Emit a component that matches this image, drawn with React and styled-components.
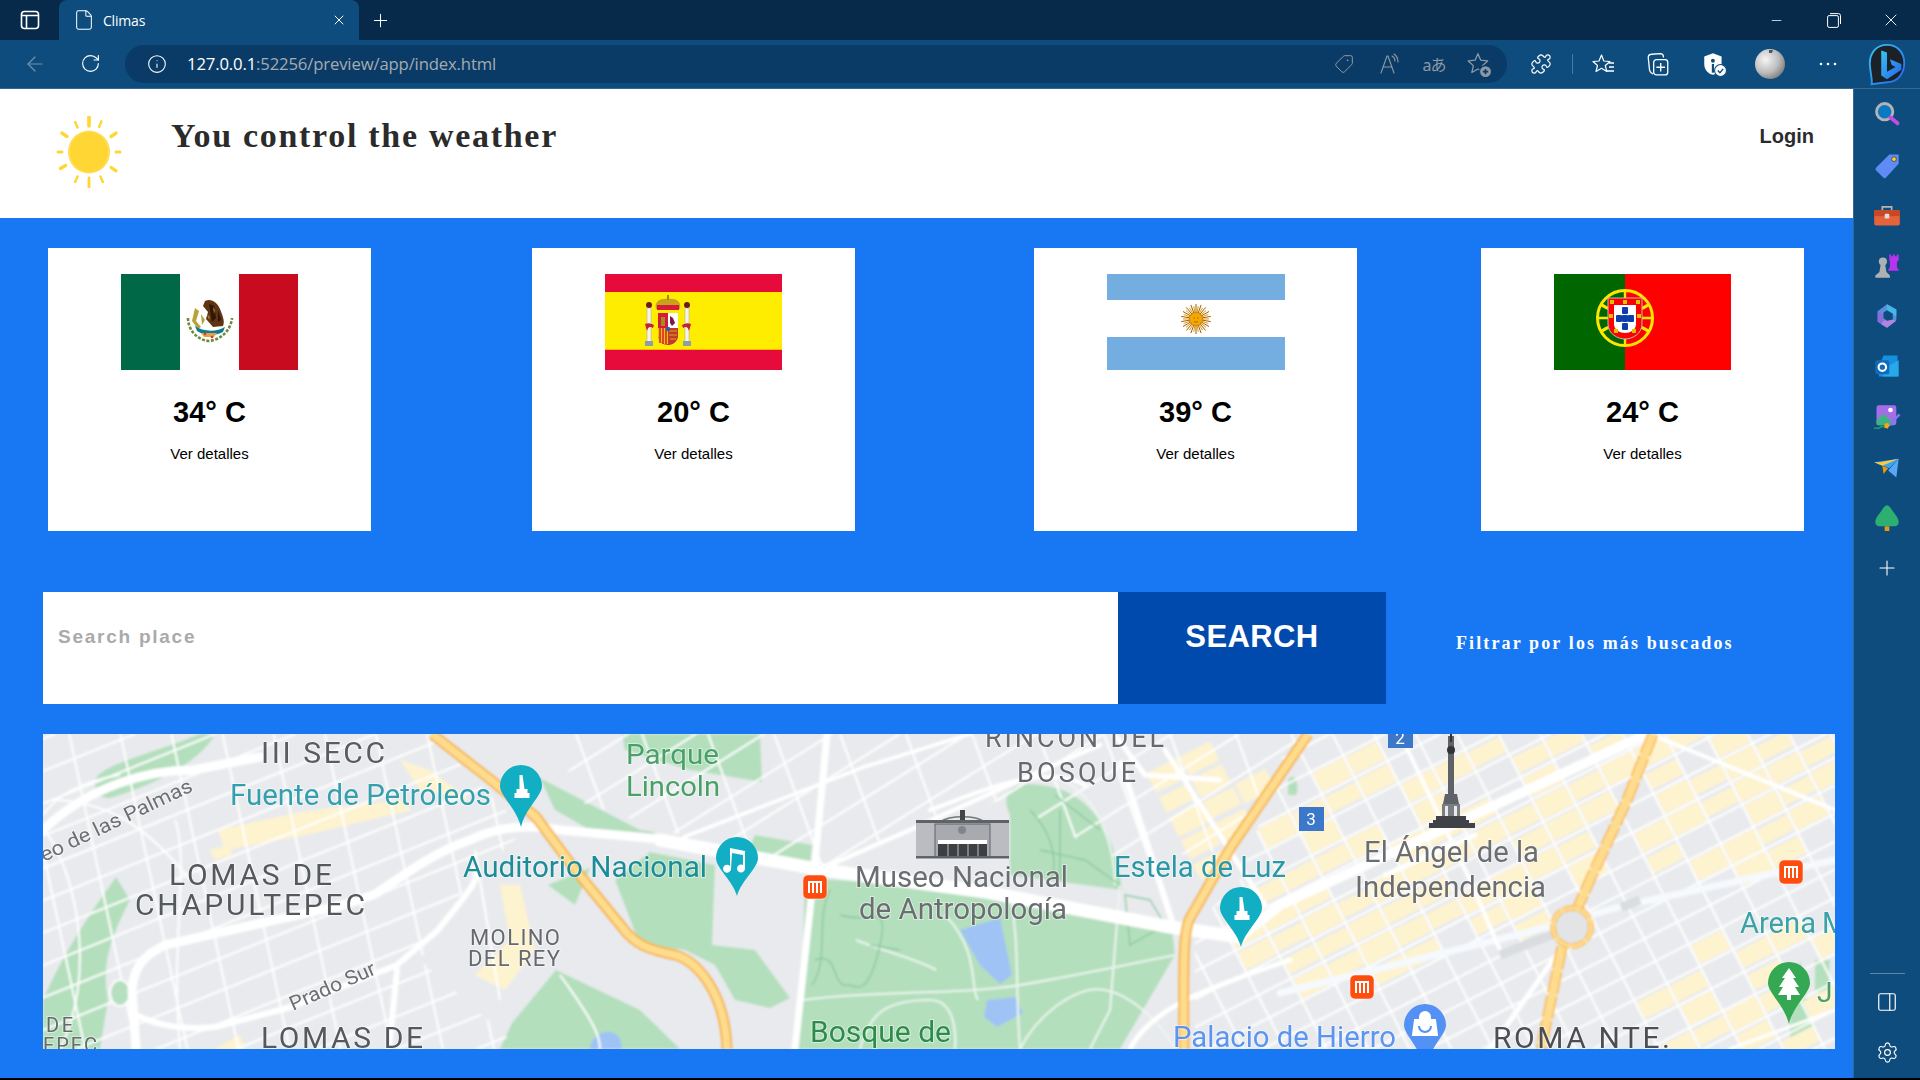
import React from "react";
import styled, { createGlobalStyle } from "styled-components";
import { ArrowLeft, RotateCw, Info, Tag, Puzzle, Plus, X, Minus, File as FileIcon, Settings, PanelRight } from "lucide-react";

const Global = createGlobalStyle`
  html, body { margin: 0; padding: 0; background: #000; overflow: hidden; }
  * { box-sizing: border-box; }
`;

const Shell = styled.div`
  width: 1920px; height: 1080px; background: #000; display: flex; flex-direction: column; overflow: hidden;
  font-family: "Liberation Sans", Arial, sans-serif;
`;
const TitleBar = styled.div`
  height: 40px; background: #072a4a; display: flex; align-items: flex-end; color: #fff; flex: none;
`;
const TabToggle = styled.div`
  width: 59px; height: 40px; display: flex; align-items: center; justify-content: center;
`;
const BrowserTab = styled.div`
  width: 300px; height: 40px; background: #0d4c7d; border-radius: 8px 8px 0 0; display: flex; align-items: center;
  padding: 0 12px 0 14px; font: 14px "Open Sans", "Noto Sans", sans-serif; color: #fff;
`;
const TabLabel = styled.span` margin-left: 8px; flex: 1; letter-spacing: -0.2px; `;
const NewTab = styled.div` width: 42px; height: 40px; display: flex; align-items: center; justify-content: center; `;
const WindowControls = styled.div` margin-left: auto; display: flex; height: 40px; align-items: center; padding-right: 1px; `;
const WinButton = styled.div` width: 57px; display: flex; justify-content: center; align-items: center; `;

const ToolBar = styled.div`
  height: 49px; background: #0d4c7d; display: flex; align-items: center; flex: none; border-bottom: 1px solid #34688f; padding-bottom: 1px;
`;
const NavSlot = styled.div`
  width: 32px; height: 32px; display: flex; align-items: center; justify-content: center; margin-left: ${p => p.$ml}px; flex: none; color: ${p => p.$dim ? "#6f94b3" : "#fff"};
`;
const AddressPill = styled.div`
  width: 1382px; height: 38px; margin-left: 19px; background: #0a3b66; border-radius: 19px; display: flex; align-items: center; padding: 0 12px 0 22px; flex: none;
`;
const Url = styled.span`
  font: 16.7px "Open Sans", "Noto Sans", sans-serif; color: #a5abb1; margin-left: 20px; letter-spacing: -0.15px; flex: 1;
  b { font-weight: 400; color: #fff; }
`;
const PillSlot = styled.div`
  width: 32px; height: 32px; margin-left: 13px; display: flex; align-items: center; justify-content: center; color: #8d99a5; flex: none;
  font: 16px "Noto Sans", "Noto Sans CJK JP", sans-serif; letter-spacing: -1px;
`;
const Divider = styled.div` width: 1px; height: 20px; background: #4d7a9c; margin-left: 15px; flex: none; `;

const Body = styled.div` flex: none; display: flex; height: 989px; `;
const Page = styled.main` width: 1853px; background: #1877f2; display: flex; flex-direction: column; flex: none; `;
const SideBar = styled.aside`
  width: 67px; background: #0d4c7d; border-left: 1px solid #34688f; display: flex; flex-direction: column; align-items: center; flex: none;
`;
const SideSlot = styled.div`
  height: 50.4px; width: 100%; display: flex; align-items: center; justify-content: center; flex: none; color: #fff;
`;
const SideRule = styled.div` width: 35px; height: 1px; background: #5b86a7; margin-top: auto; margin-bottom: 3px; flex: none; `;
const SideFoot = styled.div` height: 50px; width: 100%; display: flex; align-items: center; justify-content: center; color: #fff; flex: none; margin-bottom: ${p => p.$mb || 0}px; `;

const Header = styled.header` height: 129px; background: #fff; display: flex; align-items: flex-start; padding: 27px 39px 0 56px; flex: none; `;
const Title = styled.h1`
  margin: 2px 0 0 49px; font: bold 34px/36px "Liberation Serif", "Times New Roman", serif; letter-spacing: 1.7px; color: #2b2b2b;
`;
const Login = styled.a` margin: 2px 0 0 auto; font: bold 20px/36px "Liberation Sans", Arial, sans-serif; color: #2b2b2b; `;

const Cards = styled.section` display: flex; padding: 30px 0 0 48px; flex: none; `;
const Card = styled.article`
  width: 323px; height: 283px; background: #fff; margin-left: ${p => p.$ml}px; display: flex; flex-direction: column; align-items: center; padding-top: 26px; flex: none;
`;
const Temp = styled.div` margin-top: 25px; font: bold 29px/34px "Liberation Sans", Arial, sans-serif; color: #000; `;
const Details = styled.a` margin-top: 15px; font: 15px/20px "Liberation Sans", Arial, sans-serif; color: #000; `;

const SearchRow = styled.section` display: flex; align-items: flex-start; margin-top: 61px; padding-left: 43px; flex: none; `;
const SearchInput = styled.input`
  width: 1075px; height: 112px; border: 0; background: #fff; padding: 0 15px 22px; outline: none; flex: none;
  font: bold 19px "Liberation Sans", Arial, sans-serif; letter-spacing: 1.75px;
  &::placeholder { color: #aaa; opacity: 1; }
`;
const SearchButton = styled.button`
  width: 268px; height: 112px; background: #004aad; border: 0; color: #fff; padding: 0 0 22px; flex: none;
  font: bold 31px "Liberation Sans", Arial, sans-serif; letter-spacing: 0.4px;
`;
const FilterLink = styled.a`
  margin: 40px 0 0 70px; font: bold 18px/22px "Liberation Serif", "Times New Roman", serif; letter-spacing: 2.12px; color: #fff;
`;
const MapFrame = styled.section`
  margin: 30px 0 0 43px; width: 1792px; height: 315px; overflow: hidden; flex: none; background: #e8eaed; line-height: 0;
`;
const MapText = styled.text`
  font-family: Roboto, "Noto Sans", sans-serif; font-size: ${p => p.$size}px; fill: ${p => p.$fill};
  stroke: rgba(255,255,255,.45); stroke-width: 2px; paint-order: stroke;
`;
const Svg = styled.svg` display: block; flex: none; `;

const rnd = (i, j) => { const s = Math.sin(i * 12.9898 + j * 78.233) * 43758.5453; return s - Math.floor(s); };

const inPoly = (x, y, pts) => {
  let c = false;
  for (let i = 0, j = pts.length - 1; i < pts.length; j = i++) {
    const [xi, yi] = pts[i], [xj, yj] = pts[j];
    if ((yi > y) !== (yj > y) && x < ((xj - xi) * (y - yi)) / (yj - yi) + xi) c = !c;
  }
  return c;
};

const yellowZones = [
  { p: [[1300, 760], [1640, 734], [1590, 880], [1550, 925], [1290, 1000], [1240, 940]], t: 0.88 },
  { p: [[1650, 734], [1835, 734], [1835, 850], [1700, 905], [1640, 850]], t: 0.72 },
  { p: [[1660, 950], [1835, 920], [1835, 1049], [1640, 1049]], t: 0.55 },
  { p: [[1140, 770], [1215, 740], [1275, 790], [1225, 880], [1190, 870]], t: 1 },
];

const downtownBlocks = (() => {
  const out = [];
  const a = (-27 * Math.PI) / 180, du = 37, dv = 25;
  for (let i = -24; i < 24; i++) for (let j = -24; j < 24; j++) {
    const u = (i + 0.5) * du, v = (j + 0.5) * dv;
    const cx = 1500 + Math.cos(a) * u - Math.sin(a) * v;
    const cy = 900 + Math.sin(a) * u + Math.cos(a) * v;
    const zone = yellowZones.find(z => inPoly(cx, cy, z.p));
    if (zone && rnd(i, j) < zone.t) out.push([cx, cy, du - 3, dv - 3 - rnd(j, i) * 6]);
  }
  return out;
})();

const gridLines = (ox, oy, deg, step, n, len) => {
  const out = [];
  const a = (deg * Math.PI) / 180;
  for (let i = -n; i <= n; i++) {
    const mx = ox - Math.sin(a) * i * step, my = oy + Math.cos(a) * i * step;
    out.push(`M${mx - Math.cos(a) * len} ${my - Math.sin(a) * len}L${mx + Math.cos(a) * len} ${my + Math.sin(a) * len}`);
  }
  return out.join("");
};

const labels = [
  ["III SECC", 261, 763, 124, 30, "#5a5d61"],
  ["Fuente de Petróleos", 230, 805, 261, 29, "#35a0ad"],
  ["LOMAS DE", 169, 885, 163, 30, "#55585c"],
  ["CHAPULTEPEC", 135, 915, 230, 30, "#55585c"],
  ["MOLINO", 470, 945, 90, 22, "#66696d"],
  ["DEL REY", 468, 966, 92, 22, "#66696d"],
  ["LOMAS DE", 261, 1048, 162, 30, "#55585c"],
  ["DE", 46, 1032, 27, 20, "#66696d"],
  ["EPEC", 43, 1052, 54, 20, "#66696d"],
  ["Auditorio Nacional", 463, 877, 244, 29, "#1c8c98"],
  ["Parque", 626, 764, 93, 28, "#4aa068"],
  ["Lincoln", 626, 796, 94, 28, "#4aa068"],
  ["RINCÓN DEL", 985, 747, 179, 27, "#66696d"],
  ["BOSQUE", 1017, 782, 119, 27, "#66696d"],
  ["Museo Nacional", 855, 887, 213, 30, "#6b6e72"],
  ["de Antropología", 859, 919, 208, 30, "#6b6e72"],
  ["Estela de Luz", 1114, 877, 172, 29, "#2a98a6"],
  ["Bosque de", 810, 1042, 141, 29, "#2f8c4c"],
  ["Palacio de Hierro", 1173, 1047, 223, 29, "#5b94f2"],
  ["El Ángel de la", 1364, 862, 175, 30, "#6b6e72"],
  ["Independencia", 1355, 897, 191, 30, "#6b6e72"],
  ["Arena", 1740, 933, 76, 29, "#3aa3a8"],
  ["M", 1822, 933, 24, 29, "#3aa3a8"],
  ["ROMA NTE.", 1493, 1048, 177, 30, "#4c4f53"],
  ["J", 1817, 1002, 10, 28, "#4aa068"],
];

const Pin = ({ x, y, tip, r = 21, fill = "#12afc4", children }) => (
  <g>
    <path d={`M${x} ${tip}C${x - 4} ${y + r + 2} ${x - r} ${y + 10} ${x - r} ${y}A${r} ${r} 0 1 1 ${x + r} ${y}C${x + r} ${y + 10} ${x + 4} ${y + r + 2} ${x} ${tip}Z`} fill={fill} />
    {children}
  </g>
);
const Metro = ({ x, y }) => (
  <g transform={`translate(${x - 12} ${y - 12})`}>
    <rect width="24" height="24" rx="5" fill="#ff4d10" stroke="#fff" strokeOpacity=".5" />
    <path d="M5 7h14M6 7v11M10 7v11M14 7v11M18 7v11" stroke="#fff" strokeWidth="2" fill="none" />
  </g>
);
const Monument = ({ x, y }) => (
  <path d={`M${x - 1.5} ${y - 13}h3l2 14h3v4h2v5h-15v-5h2v-4h3z`} fill="#fff" />
);

const MapArt = () => (
  <Svg viewBox="43 734 1792 315" width="1792" height="315">
    <defs>
      <filter id="soft" x="0" y="0" width="100%" height="100%"><feGaussianBlur stdDeviation="0.9" /></filter>
      <filter id="softText" x="-5%" y="-5%" width="110%" height="110%"><feGaussianBlur stdDeviation="0.45" /></filter>
      <clipPath id="lomas"><path d="M43 734H430L525 830 470 880 420 960 520 1049H43Z" /></clipPath>
      <clipPath id="polanco"><path d="M560 734H1300L1235 850 1120 860 1000 800 820 868 670 832 575 800Z" /></clipPath>
      <clipPath id="downtown"><path d="M1290 734H1835V1049H1195L1195 925 1240 880Z" /></clipPath>
    </defs>
    <g filter="url(#soft)">
      <rect x="43" y="734" width="1792" height="315" fill="#e8eaed" />
      <g fill="#b4dfbd">
        <path d="M95 783C95 765 150 755 200 734H215C200 765 140 790 110 798 100 798 95 793 95 783Z" />
        <path d="M116 877L130 900C115 930 100 960 108 1000L100 1049H43V1000C60 960 85 920 116 877Z" />
        <path d="M540 778L640 830 655 832 648 838 590 830 555 810Z" />
        <path d="M622 734H760L762 782 690 770 625 750Z" />
        <path d="M615 880L650 852 715 865 712 945 755 950 790 998 770 1008 735 1000 715 965 685 950 640 945Z" />
        <path d="M556 970L640 1010 680 1049H500L512 1023Z" />
        <path d="M548 885L590 868 575 905Z" />
        <path d="M805 878L1000 890 1172 930 1175 955 1120 1049H796L803 950Z" />
        <path d="M1010 815C1000 795 1010 780 1040 785 1090 790 1115 830 1122 890L1010 875Z" />
        <path d="M755 835L812 845 810 865 745 858Z" />
        <path d="M1790 1020L1800 960 1815 1040 1790 1045Z" />
        <path d="M1815 960L1830 960 1828 992 1815 992Z" />
        <path d="M1288 780C1295 770 1300 785 1296 795L1288 795Z" />
      </g>
      <path d="M960 930L1000 918 1012 975 1000 984 980 965Z M987 1000L1015 997 1023 1013 997 1027 984 1017Z M590 1049C590 1035 610 1025 620 1038L622 1049Z" fill="#a0c3f5" />
      <g fill="#fef3cf">
        {downtownBlocks.map(([x, y, w, h], i) => (
          <rect key={i} x={-w / 2} y={-h / 2} width={w} height={h} transform={`translate(${x} ${y}) rotate(-27)`} />
        ))}
        <path d="M218 830L300 812 400 800 412 810 305 835 225 850ZM210 850L230 845 232 855 215 860Z" />
        <path d="M400 760L430 770 470 800 420 790ZM500 885L520 885 535 950 505 990 475 975 510 940Z" />
        <path d="M215 1049L240 1035 245 1049Z" />
      </g>
      <g fill="none" stroke="#fff" strokeWidth="2.1" opacity=".95">
        <g clipPath="url(#lomas)">
          <path d={gridLines(260, 910, -22, 30, 12, 400)} />
          <path d={gridLines(260, 910, 78, 50, 9, 300)} />
        </g>
        <g clipPath="url(#polanco)">
          <path d={gridLines(930, 800, -32, 36, 8, 500)} />
          <path d={gridLines(930, 800, 70, 62, 8, 200)} />
        </g>
        <g clipPath="url(#downtown)">
          <path d={gridLines(1500, 900, -27, 25, 22, 700)} />
          <path d={gridLines(1500, 900, 63, 37, 18, 500)} />
        </g>
        <path d="M43 815C60 790 90 780 120 775M45 830C80 880 95 980 60 1049M50 800C110 800 150 830 190 880" />
        <path d="M175 820C190 860 170 940 180 1049M475 850L500 1000M560 975C600 1030 600 1040 600 1049" />
        <ellipse cx="120" cy="993" rx="10" ry="13" fill="#b4dfbd" />
        <g stroke="#eef7f0">
          <path d="M803 1000C880 990 960 995 1020 985S1150 960 1175 955" />
          <path d="M860 1049C870 1010 890 1000 930 1000 960 1000 955 1049 955 1049" />
          <path d="M1010 890C1020 950 1015 985 1020 1049M945 915C980 950 970 990 978 1000M1120 885L1110 1010 1090 1049" />
          <path d="M1020 1049C1040 1010 1080 985 1105 990S1160 1020 1175 1049" />
          <path d="M856 940C880 950 920 960 936 970" />
          <path d="M1060 780C1100 795 1115 850 1115 885" />
        </g>
        <g stroke="#86c999" strokeWidth="1.4">
          <path d="M830 890C815 920 830 960 812 985M840 915C870 925 890 900 880 945S860 990 850 985M815 960C840 950 830 990 850 985" />
          <path d="M1030 810C1050 830 1060 860 1050 880M1060 810V880M1040 850L1085 860 1120 885M1055 795L1100 830" />
          <path d="M870 945L900 950M1125 895L1150 900 1165 925 1130 945Z" />
        </g>
      </g>
      <g fill="none" stroke="#fff" strokeLinecap="round" strokeLinejoin="round">
        <path d="M136 1049L132 990C134 965 145 955 165 945L275 920C320 910 350 905 377 893 410 870 440 850 470 840 500 825 530 825 560 830L670 840" strokeWidth="9" />
        <path d="M43 830C90 785 150 770 193 770L260 757" strokeWidth="9" />
        <path d="M136 1015C160 1027 190 1030 215 1027L291 1007 397 965 438 930C470 890 480 880 475 868" strokeWidth="6" />
        <path d="M397 970L389 1049" strokeWidth="6" />
        <path d="M660 840L823 870 986 892 1170 927 1240 937" strokeWidth="13" />
        <path d="M1240 937L1280 905 1549 780 1647 734" strokeWidth="10" />
        <path d="M827 734L815 863 795 1049" strokeWidth="7" />
        <path d="M823 868L910 830 1020 780 1100 745" strokeWidth="4.5" />
        <path d="M684 837L864 767 970 734" strokeWidth="3.5" />
        <path d="M1121 763L1174 927" strokeWidth="6" />
        <path d="M1280 993L1525 933 1619 907 1835 860" strokeWidth="7" stroke="#f6f9fd" />
        <path d="M1115 735L1145 775 1220 780M1165 750L1265 905M1490 1049L1560 950" strokeWidth="5" />
        <path d="M1085 785C1040 760 960 800 930 810" strokeWidth="4" />
        <path d="M1400 734L1470 880 1500 950M1650 734L1835 810" strokeWidth="4" />
        <path d="M1130 1049C1150 1010 1200 990 1290 960" strokeWidth="5" />
        <path d="M1475 835L1385 875" strokeWidth="5" />
        <path d="M1730 1049L1835 1010" strokeWidth="3" />
      </g>
      <path d="M1500 955L1640 900" stroke="#dadde0" strokeWidth="9" strokeDasharray="70 60" fill="none" />
      <g fill="none" strokeLinejoin="round" strokeLinecap="butt">
        <path d="M432 734L491 780 536 817 573 867 622 927C635 945 650 950 675 955 695 960 725 990 727 1049" stroke="#f7ac26" strokeWidth="11" />
        <path d="M432 734L491 780 536 817 573 867 622 927C635 945 650 950 675 955 695 960 725 990 727 1049" stroke="#fedc8e" strokeWidth="7.5" />
        <path d="M1308 734L1231 847 1190 918C1184 930 1183 950 1184 1049" stroke="#f7ac26" strokeWidth="11" />
        <path d="M1308 734L1231 847 1190 918C1184 930 1183 950 1184 1049" stroke="#fedc8e" strokeWidth="7.5" />
        <path d="M1653 734L1627 800 1590 880 1578 907M1562 947L1541 1049" stroke="#f7ac26" strokeWidth="11" strokeDasharray="22 3" />
        <path d="M1653 734L1627 800 1590 880 1578 907M1562 947L1541 1049" stroke="#fedc8e" strokeWidth="8.5" />
        <circle cx="1572" cy="927" r="19" stroke="#f9bd50" strokeWidth="6" fill="#e2e4e6" strokeDasharray="14 2" />
        <circle cx="1572" cy="927" r="19" stroke="#fedc8e" strokeWidth="3.5" />
      </g>
    </g>

    <g filter="url(#softText)">
      {labels.map(([t, x, y, w, s, c]) => (
        <MapText key={t + x} x={x} y={y} $size={s} $fill={c} textLength={w} lengthAdjust={t === t.toUpperCase() ? "spacing" : "spacingAndGlyphs"}>{t}</MapText>
      ))}
      <MapText x="0" y="0" transform="translate(44 862) rotate(-25.5)" $size={20} $fill="#6c6f73" textLength="166" lengthAdjust="spacingAndGlyphs">eo de las Palmas</MapText>
      <MapText x="0" y="0" transform="translate(293 1011) rotate(-24)" $size={20} $fill="#6c6f73" textLength="92" lengthAdjust="spacingAndGlyphs">Prado Sur</MapText>
    </g>

    <Pin x={521} y={786} tip={827}><Monument x={521} y={788} /></Pin>
    <Pin x={1241} y={908} tip={947}><Monument x={1241} y={910} /></Pin>
    <Pin x={737} y={858} tip={896}>
      <path d="M731 870a4 4 0 1 1-1-3V849l15 3v17a4 4 0 1 1-2-3V856l-11-2z" fill="#fff" transform="translate(0 -1)" />
    </Pin>
    <Pin x={1425} y={1025} tip={1070} fill="#5491f5">
      <path d="M1415 1020h20l2 15h-24zM1420 1020v-3a5 5 0 0 1 10 0v3" fill="#fff" stroke="#fff" strokeWidth="2" />
      <path d="M1419 1026a6 6 0 0 0 12 0" stroke="#5491f5" strokeWidth="2" fill="none" />
    </Pin>
    <Pin x={1789} y={983} tip={1024} fill="#34a853">
      <path d="M1789 968l7 10h-3l6 9h-4l5 8h-9v5h-4v-5h-9l5-8h-4l6-9h-3z" fill="#fff" />
    </Pin>
    <Metro x={815} y={887} /><Metro x={1791} y={872} /><Metro x={1362} y={987} />
    <g fontFamily="Roboto, sans-serif" fontSize="17" fill="#fff" textAnchor="middle">
      <rect x="1299" y="807" width="25" height="24" fill="#3b78c9" />
      <text x="1311" y="825">3</text>
      <rect x="1388" y="730" width="25" height="18" fill="#3b78c9" />
      <text x="1400" y="744">2</text>
    </g>
    <g>
      <path d="M940 822C950 815 975 815 985 822Z" fill="none" stroke="#777" strokeWidth="1.5" />
      <rect x="960" y="810" width="5" height="10" fill="#444" />
      <rect x="916" y="820" width="93" height="37" fill="#babcc2" />
      <rect x="916" y="820" width="93" height="3" fill="#5f6368" />
      <rect x="935" y="824" width="55" height="33" fill="#a8aab0" stroke="#5f6368" />
      <rect x="938" y="840" width="49" height="4" fill="#fff" />
      <rect x="938" y="844" width="49" height="13" fill="#3c4043" />
      <path d="M948 844v13M958 844v13M968 844v13M978 844v13" stroke="#babcc2" />
      <circle cx="962" cy="830" r="4" fill="#80868b" />
      <rect x="916" y="856" width="93" height="2.5" fill="#5f6368" />
    </g>
    <g fill="#5f6368">
      <rect x="1448" y="736" width="6" height="58" />
      <rect x="1450" y="734" width="2" height="8" fill="#333" />
      <circle cx="1451" cy="750" r="4" fill="#333" />
      <path d="M1445 794h12l2 10h-16z" />
      <path d="M1442 804h18v14h-18z" fill="#7a7e83" />
      <path d="M1445 806h3v12h-3zM1454 806h3v12h-3z" fill="#e8eaed" />
      <path d="M1436 816h30v4h-30zM1433 820h36v3h-36zM1429 823h46v3h-46zM1429 826h46v2h-46z" fill="#3f4347" />
    </g>
  </Svg>
);

const FlagMexico = () => (
  <Svg width="177" height="96" viewBox="0 0 177 96">
    <rect width="59" height="96" fill="#006847" />
    <rect x="59" width="59" height="96" fill="#fff" />
    <rect x="118" width="59" height="96" fill="#c80b1f" />
    <path d="M84 27C90 24 96 28 99 35 102 43 104 47 102 52L92 53 85 45 87 38 82 32Z" fill="#5f3313" />
    <path d="M88 30l5 2 2 12-4 4zM97 36l3 10-3 2z" fill="#2e1708" />
    <path d="M92 33l2 3-1 4zM86 40l3 3-1 3z" fill="#b5772d" />
    <path d="M74 34l4 3-3 10 5 6-3 2-6-8zM80 40l4 6-3 5z" fill="#b8a23a" />
    <path d="M67 44C67 56 76 66 88 67 100 66 110 56 111 44" fill="none" stroke="#6d8a3a" strokeWidth="2.6" strokeDasharray="3 1.5" />
    <path d="M74 52C82 58 96 58 104 53L102 58C94 62 84 62 76 57Z" fill="#0e7d8c" />
    <path d="M80 59h16l-3 4h-10z" fill="#e5a14e" />
    <circle cx="84" cy="60" r="1.3" fill="#e3352b" /><circle cx="91" cy="63" r="1.3" fill="#e3352b" />
  </Svg>
);
const FlagSpain = () => (
  <Svg width="177" height="96" viewBox="0 0 177 96">
    <rect width="177" height="96" fill="#e60b3b" />
    <rect y="18" width="177" height="58" fill="#ffed00" />
    <rect y="75" width="177" height="1" fill="#f2b705" />
    <path d="M51 35C49 27 56 24 63 25 70 24 77 27 75 35Z" fill="#c8a21c" />
    <path d="M52 31h22v5H52z" fill="#d61a3c" />
    <path d="M62 21h2v5h-2z" fill="#a58516" />
    <path d="M53 39h20v22c0 7-6 10-10 10s-10-3-10-10z" fill="#d61a3c" />
    <rect x="63" y="39" width="10" height="15" fill="#fff" />
    <path d="M65 42l3 2 2 5-3 3-2-3z" fill="#7d1a4c" />
    <path d="M56 43h4v9h-4z" fill="#a98a1e" />
    <path d="M53 54h10v16c-5 1-10-3-10-9z" fill="#f5c400" />
    <path d="M55 54v15M58 54v16M61 54v16" stroke="#d61a3c" strokeWidth="1.5" />
    <path d="M63 54h10v7c0 6-5 9-10 10z" fill="#c23a2a" />
    <path d="M64 57h8M64 61h8M65 65h6" stroke="#d6a81c" strokeWidth="1" />
    <circle cx="63" cy="55" r="2.3" fill="#2f5fa8" />
    <rect x="42" y="34" width="4" height="34" fill="#f3f3f3" stroke="#999" strokeWidth=".4" />
    <rect x="80" y="34" width="4" height="34" fill="#f3f3f3" stroke="#999" strokeWidth=".4" />
    <circle cx="44" cy="31" r="3" fill="#6b1a20" /><circle cx="82" cy="31" r="3" fill="#6b1a20" />
    <rect x="40" y="67" width="8" height="5" fill="#8aa0a8" /><rect x="78" y="67" width="8" height="5" fill="#8aa0a8" />
    <path d="M40 50c4-2 7 0 9 1l-1 3c-3-2-5-1-6 3zM86 50c-4-2-7 0-9 1l1 3c3-2 5-1 6 3z" fill="#c3203b" />
  </Svg>
);
const FlagArgentina = () => (
  <Svg width="178" height="96" viewBox="0 0 178 96">
    <rect width="178" height="96" fill="#74aee0" />
    <rect y="26" width="178" height="37" fill="#fff" />
    {Array.from({ length: 36 }, (_, i) => {
      const a = (i * Math.PI) / 18, r = i % 2 ? 15 : 13;
      return <line key={i} x1="89" y1="45" x2={89 + Math.cos(a) * r} y2={45 + Math.sin(a) * r} stroke={i % 2 ? "#a35f00" : "#e69a0a"} strokeWidth="1" />;
    })}
    <circle cx="89" cy="45" r="6.5" fill="#f5a800" stroke="#b87400" strokeWidth=".6" />
    <path d="M86.5 44h1.5M90 44h1.5M87 47.5q2 1.5 4 0" stroke="#8a5200" strokeWidth=".7" fill="none" />
  </Svg>
);
const FlagPortugal = () => (
  <Svg width="177" height="96" viewBox="0 0 177 96">
    <rect width="177" height="96" fill="#f00" />
    <rect width="71" height="96" fill="#060" />
    <g fill="none" stroke="#ffe600">
      <ellipse cx="71" cy="44" rx="27.5" ry="27.5" strokeWidth="3" />
      <path d="M44 44H98M47 31C60 40 82 40 95 31M47 57C60 48 82 48 95 57M71 16V72" strokeWidth="2.4" />
      <path d="M47 30L95 58M95 30L47 58" strokeWidth="2.2" />
    </g>
    <path d="M54 24H88V50C88 60 78 65 71 65S54 60 54 50Z" fill="#f00" stroke="#bbb" strokeWidth="1" />
    <path d="M60 31H82V50C82 56 76 59 71 59S60 56 60 50Z" fill="#fff" />
    <g fill="#0f3fa8">
      <rect x="68" y="33" width="6" height="7" rx="1" /><rect x="62" y="41" width="6" height="7" rx="1" /><rect x="68" y="41" width="6" height="7" rx="1" /><rect x="74" y="41" width="6" height="7" rx="1" /><rect x="68" y="49" width="6" height="7" rx="1" />
    </g>
    <g fill="#e3c000"><rect x="56" y="26" width="4" height="4" /><rect x="69" y="26" width="4" height="4" /><rect x="82" y="26" width="4" height="4" /><rect x="55" y="40" width="4" height="4" /><rect x="83" y="40" width="4" height="4" /><rect x="60" y="55" width="4" height="4" /><rect x="78" y="55" width="4" height="4" /></g>
  </Svg>
);

const SunLogo = () => {
  const rays = [[0, 3.6], [22, 2.5], [55, 3.4], [90, 3], [125, 3.2], [155, 2.5], [180, 2.8], [205, 2.5], [240, 3.4], [270, 3], [305, 3.4], [335, 2.5]];
  return (
    <Svg width="66" height="72" viewBox="-33 -36 66 72">
      <ellipse cx="0" cy="0" rx="21" ry="21.5" fill="#ffd633" />
      <ellipse cx="0" cy="0" rx="20" ry="21" fill="none" stroke="#fff" strokeOpacity=".4" strokeWidth=".8" />
      {rays.map(([a, w], i) => {
        const t = ((a - 90) * Math.PI) / 180;
        const long = i === 0 || i === 6;
        const r1 = long ? 26 : 27, r2 = long ? 36 : (i % 3 === 0 ? 31 : 33);
        return <line key={i} x1={Math.cos(t) * r1} y1={Math.sin(t) * r1} x2={Math.cos(t) * r2} y2={Math.sin(t) * r2} stroke="#ffd633" strokeWidth={w} strokeLinecap="round" />;
      })}
    </Svg>
  );
};

const stroke = { fill: "none", stroke: "currentColor", strokeWidth: 1.4, strokeLinecap: "round", strokeLinejoin: "round" };
const Ico = ({ s = 24, children }) => <Svg width={s} height={s} viewBox="0 0 24 24">{children}</Svg>;

const BingLogo = () => (
  <Svg width="40" height="46" viewBox="0 0 40 48">
    <defs><linearGradient id="bg" x1="0" y1="0" x2="1" y2="1"><stop offset="0" stopColor="#36c5f0" /><stop offset="1" stopColor="#2563eb" /></linearGradient></defs>
    <path d="M20 4C31 4 38 12 38 23S31 43 20 43L4 45C5 42 3 36 2 24 2 12 9 4 20 4Z" fill="#1c2027" stroke="url(#bg)" strokeWidth="2" />
    <path d="M14 10l6 2v20l9-5-4-2-2-6 12 5v6L20 40l-6-4Z" fill="url(#bg)" />
  </Svg>
);

const sideIcons = [
  <Ico s={28} key="a"><circle cx="10" cy="10" r="7" fill="#0a78c2" stroke="#b4b4b4" strokeWidth="2.4" /><path d="M15 15l6 5" stroke="#c44ce0" strokeWidth="3.4" strokeLinecap="round" /></Ico>,
  <Ico s={28} key="b"><path d="M3 14L14 3h8v8L11 23a2 2 0 0 1-2 0l-6-6a2 2 0 0 1 0-3Z" fill="#5f8bf7" /><circle cx="18" cy="7" r="2" fill="#ffce1f" stroke="#333" strokeWidth=".6" /></Ico>,
  <Ico s={28} key="c"><path d="M8 8V5h8v3" fill="none" stroke="#b5b5b5" strokeWidth="1.4" /><rect x="1" y="8" width="22" height="13" rx="1.5" fill="#e5623a" /><rect x="1" y="8" width="22" height="5" fill="#c94722" /><rect x="10" y="11" width="4" height="4" rx="1" fill="#ddd" /></Ico>,
  <Ico s={28} key="d"><path d="M14 3h1.6v1.6h1.6V3h1.6v1.6h1.6V3H22v5l-1.5 1.5V14l1.5 2v1H13v-1l1.5-2V9.5L14 8Z" fill="#b832ef" /><circle cx="8.5" cy="9" r="3.5" fill="#aeb1b4" /><path d="M6.5 12h4l1 6 3 3v2H2v-2l3.5-3Z" fill="#aeb1b4" /></Ico>,
  <Ico s={28} key="e"><path d="M12 2l8 4.5v9L12 22l-8-5V8Z" fill="#5a8fe0" /><path d="M4 8l5 3v8l-5-2Z" fill="#8a6dd9" /><path d="M9 16l7-1 4 1-8 6-5-3Z" fill="#b085e0" /><path d="M12 2l8 4.5v6l-8-5Z" fill="#44b6e8" /><path d="M9 9l3-2 5 3v5l-5 1-3-2Z" fill="#0d4c7d" /></Ico>,
  <Ico s={28} key="f"><path d="M9 3h12v18H5V13Z" fill="#1490df" /><path d="M13 12l9-5v14H8Z" fill="#28a8ea" /><rect x="2" y="7" width="12" height="12" rx="1.5" fill="#0f6cbd" /><circle cx="8" cy="13" r="3.2" fill="none" stroke="#fff" strokeWidth="1.8" /></Ico>,
  <Ico s={28} key="g"><rect x="3" y="2" width="17" height="17" rx="2" fill="#a56ee8" /><path d="M3 15l6-6 8 8v2H4a1 1 0 0 1-1-1Z" fill="#3fb27f" /><circle cx="15" cy="6" r="2" fill="#fff" /><path d="M12 20L22 9l1.5 1.5L13 21Z" fill="#7a7cf0" /><path d="M10 18l3-1 1 2-1.5 3-3-1Z" fill="#f7a80b" /><path d="M1 22c2-2 3 1 5-1s3 0 3 0" stroke="#22a36e" strokeWidth="1.2" fill="none" /></Ico>,
  <Ico s={28} key="h"><path d="M1 8l21-3-8 8Z" fill="#39a5f2" /><path d="M22 5l-2 16-7-6Z" fill="#5aa7f7" /><path d="M1 8h5l16-3L8 11Z" fill="#ffc83d" /><path d="M8 11l1 7 4-5Z" fill="#e89a00" /></Ico>,
  <Ico s={28} key="i"><path d="M12 2c2 0 3.5 3 5 5s5 6 5 9-2 4-4 4H6c-2 0-4-1-4-4s3.5-7 5-9 3-5 5-5Z" fill="#2eaf72" /><rect x="10" y="20" width="4" height="4" fill="#e29a1c" /></Ico>,
];

export default function App() {
  return (
    <Shell>
      <Global />
      <TitleBar>
        <TabToggle>
          <Svg width="20" height="20" viewBox="0 0 20 20"><rect x="1.5" y="1.5" width="17" height="17" rx="3" fill="none" stroke="#fff" strokeWidth="1.6" /><path d="M2 5.5H18M6.5 5.5V18" stroke="#fff" strokeWidth="1.6" /></Svg>
        </TabToggle>
        <BrowserTab>
          <FileIcon size={22} strokeWidth={1.1} color="#fff" />
          <TabLabel>Climas</TabLabel>
          <X size={16} strokeWidth={1.5} color="#fff" />
        </BrowserTab>
        <NewTab><Plus size={21} strokeWidth={1.2} color="#fff" /></NewTab>
        <WindowControls>
          <WinButton><Minus size={15} strokeWidth={1.2} color="#fff" /></WinButton>
          <WinButton>
            <Svg width="14" height="15" viewBox="0 0 14 15"><rect x=".6" y="2.6" width="10.8" height="11.8" rx="1.5" fill="none" stroke="#fff" /><path d="M3 .6h8.5a2 2 0 0 1 2 2V11" fill="none" stroke="#fff" /></Svg>
          </WinButton>
          <WinButton><X size={20} strokeWidth={1.1} color="#fff" /></WinButton>
        </WindowControls>
      </TitleBar>
      <ToolBar>
        <NavSlot $ml={19} $dim><ArrowLeft size={24} strokeWidth={1.2} /></NavSlot>
        <NavSlot $ml={23}><RotateCw size={21} strokeWidth={1.3} /></NavSlot>
        <AddressPill>
          <Info size={20} strokeWidth={1.3} color="#fff" />
          <Url><b>127.0.0.1</b>:52256/preview/app/index.html</Url>
          <PillSlot><Tag size={20} strokeWidth={1.2} style={{ transform: "scaleX(-1)" }} /></PillSlot>
          <PillSlot>
            <Ico s={24}><path d="M4 21L10 4h1l6 17M6.5 15h8" {...stroke} strokeWidth={1.1} /><path d="M15 4c2 1 3 3 3 5M17 2c3 2 4 5 4 8" {...stroke} strokeWidth={1.1} /></Ico>
          </PillSlot>
          <PillSlot>aあ</PillSlot>
          <PillSlot>
            <Ico s={26}><path d="M11 2.5l2.6 6 6.4.7-4.8 4.3 1.400 6.300L11 16.600 5.400 19.800l1.400-6.300L2 9.200l6.400-.7Z" {...stroke} strokeWidth={1.2} /><circle cx="18" cy="19" r="5.500" fill="#8d99a5" stroke="#0a3b66" strokeWidth="1" /><path d="M18 16.500v5M15.500 19h5" stroke="#0a3b66" strokeWidth="1.5" /></Ico>
          </PillSlot>
        </AddressPill>
        <NavSlot $ml={18}><Puzzle size={22} strokeWidth={1.3} /></NavSlot>
        <Divider />
        <NavSlot $ml={15}>
          <Ico s={24}><path d="M9.5 3l2.3 6 6.2.5-4.700 4 1.500 6-5.300-3.200L4 19.500l1.500-6L1 9.500l6-.5Z" {...stroke} strokeWidth={1.2} /><path d="M17 11h5M17 15h5M15 19h7" stroke="currentColor" strokeWidth="1.3" /></Ico>
        </NavSlot>
        <NavSlot $ml={22}>
          <Ico s={26}><path d="M7 21C5 20 4 18 4 16L3 6c0-2 1-3 3-3l8-.5c2 0 3 1 3 3" {...stroke} strokeWidth={1.2} /><rect x="8" y="8" width="13" height="14" rx="2.5" {...stroke} strokeWidth={1.2} /><path d="M14.5 11v8M10.5 15h8" stroke="currentColor" strokeWidth="1.3" /></Ico>
        </NavSlot>
        <NavSlot $ml={24}>
          <Ico s={26}><path d="M11 2l8 3v7c0 5-4 9-8 10-5-1-8-5-8-10V5Z" fill="#fff" /><circle cx="11" cy="9" r="1.8" fill="#0d4c7d" /><path d="M10 12h2v8h-2z" fill="#0d4c7d" /><circle cx="18" cy="18" r="5.5" fill="#fff" stroke="#0d4c7d" /><path d="M15.5 18l2 2 3-3.5" stroke="#0d4c7d" strokeWidth="1.3" fill="none" /></Ico>
        </NavSlot>
        <NavSlot $ml={24}>
          <Svg width="30" height="30" viewBox="0 0 30 30">
            <defs><radialGradient id="av" cx=".35" cy=".35" r=".8"><stop offset="0" stopColor="#f5f5f5" /><stop offset=".55" stopColor="#bdbdbd" /><stop offset="1" stopColor="#6a6a6a" /></radialGradient></defs>
            <ellipse cx="15" cy="15" rx="15" ry="15" fill="url(#av)" />
            <path d="M14 1h4l-1 3h-3z" fill="#555" />
          </Svg>
        </NavSlot>
        <NavSlot $ml={26}>
          <Svg width="20" height="6" viewBox="0 0 20 6"><circle cx="3" cy="3" r="1.3" fill="#fff" /><circle cx="10" cy="3" r="1.3" fill="#fff" /><circle cx="17" cy="3" r="1.3" fill="#fff" /></Svg>
        </NavSlot>
        <NavSlot $ml={27}><BingLogo /></NavSlot>
      </ToolBar>
      <Body>
        <Page>
          <Header>
            <SunLogo />
            <Title>You control the weather</Title>
            <Login>Login</Login>
          </Header>
          <Cards>
            <Card $ml={0}><FlagMexico /><Temp>34° C</Temp><Details>Ver detalles</Details></Card>
            <Card $ml={161}><FlagSpain /><Temp>20° C</Temp><Details>Ver detalles</Details></Card>
            <Card $ml={179}><FlagArgentina /><Temp>39° C</Temp><Details>Ver detalles</Details></Card>
            <Card $ml={124}><FlagPortugal /><Temp>24° C</Temp><Details>Ver detalles</Details></Card>
          </Cards>
          <SearchRow>
            <SearchInput placeholder="Search place" />
            <SearchButton>SEARCH</SearchButton>
            <FilterLink>Filtrar por los más buscados</FilterLink>
          </SearchRow>
          <MapFrame><MapArt /></MapFrame>
        </Page>
        <SideBar>
          {sideIcons.map((ic, i) => <SideSlot key={i}>{ic}</SideSlot>)}
          <SideSlot><Plus size={24} strokeWidth={1.1} /></SideSlot>
          <SideRule />
          <SideFoot><PanelRight size={22} strokeWidth={1.3} /></SideFoot>
          <SideFoot $mb={1}><Settings size={23} strokeWidth={1.2} /></SideFoot>
        </SideBar>
      </Body>
    </Shell>
  );
}
